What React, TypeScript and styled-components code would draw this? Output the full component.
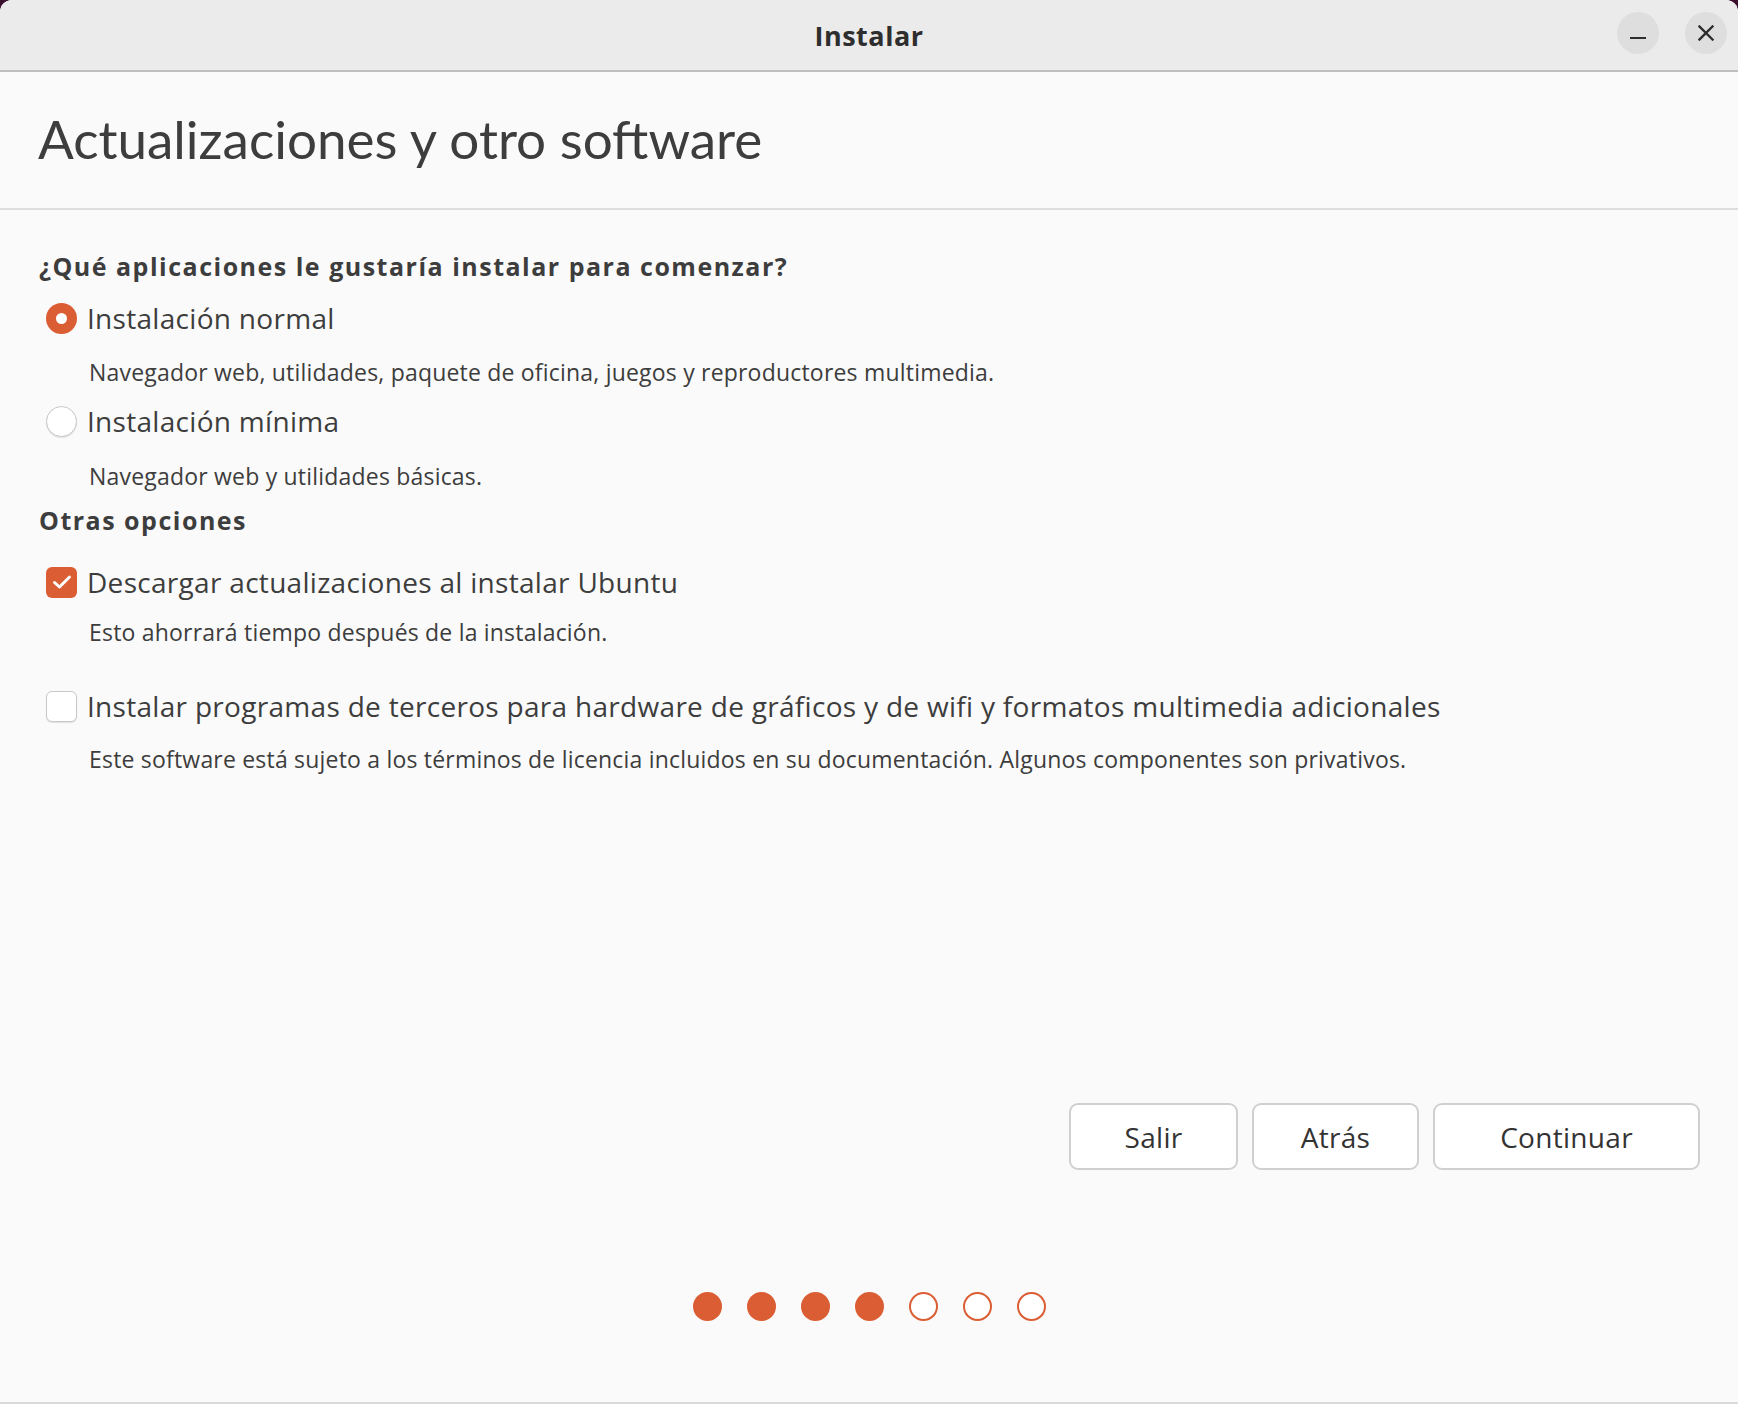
import React from "react";
import styled, { createGlobalStyle } from "styled-components";

const ORANGE = "#db5d33";
const TEXT = "#3d3d3d";
const FONT = `"Open Sans", "Lato", "DejaVu Sans", sans-serif`;
const HEAD_FONT = `"Lato", "Open Sans", sans-serif`;

const Global = createGlobalStyle`
  html, body {
    margin: 0;
    padding: 0;
    background: #3b0f2e;
  }
  body {
    font-family: ${FONT};
    color: ${TEXT};
    -webkit-font-smoothing: antialiased;
  }
`;

const Window = styled.div`
  width: 1738px;
  height: 1404px;
  display: flex;
  flex-direction: column;
  background: #fafafa;
  border-radius: 12px 12px 0 0;
  overflow: hidden;
`;

const TitleBar = styled.header`
  height: 70px;
  flex: none;
  background: #ebebeb;
  border-bottom: 2px solid #bfbfbf;
  display: grid;
  grid-template-columns: 1fr auto 1fr;
  align-items: center;
`;

const Title = styled.h1`
  grid-column: 2;
  margin: 0;
  font-family: ${FONT};
  font-size: 27px;
  font-weight: 700;
  letter-spacing: 0.5px;
  color: #2e2e2e;
`;

const WindowControls = styled.div`
  grid-column: 3;
  justify-self: end;
  display: flex;
  gap: 26px;
  padding-right: 11px;
  margin-bottom: 4px;
`;

const CtrlButton = styled.button`
  width: 42px;
  height: 42px;
  border-radius: 50%;
  border: none;
  padding: 0;
  background: #dedede;
  display: flex;
  align-items: center;
  justify-content: center;
  color: #2e2e2e;
`;

const Header = styled.div`
  height: 138px;
  box-sizing: border-box;
  padding-bottom: 4px;
  flex: none;
  display: flex;
  align-items: center;
  padding-left: 38px;
  border-bottom: 2px solid #dedede;
`;

const Heading = styled.h2`
  margin: 0;
  font-family: ${HEAD_FONT};
  font-size: 53px;
  font-weight: 400;
  color: ${TEXT};
  line-height: 1;
`;

const Content = styled.main`
  flex: 1;
  display: flex;
  flex-direction: column;
  padding-left: 39px;
`;

const Row = styled.div<{ $mt: number; $h?: number; $indent?: number }>`
  margin-top: ${(p) => p.$mt}px;
  height: ${(p) => p.$h ?? 36}px;
  display: flex;
  align-items: center;
  padding-left: ${(p) => p.$indent ?? 0}px;
`;

const SectionTitle = styled.div`
  font-size: 25px;
  font-weight: 700;
  letter-spacing: 1.5px;
  color: ${TEXT};
`;

const OptionLabel = styled.label`
  display: flex;
  align-items: center;
  gap: 10px;
  padding-left: 7px;
  font-size: 28px;
  letter-spacing: 0.3px;
  color: ${TEXT};
`;

const Description = styled.div`
  font-size: 23px;
  letter-spacing: 0.2px;
  color: ${TEXT};
`;

const Radio = styled.span<{ $checked?: boolean }>`
  width: 31px;
  height: 31px;
  box-sizing: border-box;
  border-radius: 50%;
  flex: none;
  display: flex;
  align-items: center;
  justify-content: center;
  background: ${(p) => (p.$checked ? ORANGE : "#ffffff")};
  border: ${(p) => (p.$checked ? "none" : "1.5px solid #c8c8c8")};
  box-shadow: ${(p) => (p.$checked ? "none" : "0 1px 1px rgba(0,0,0,0.1)")};
  &::after {
    content: "";
    display: ${(p) => (p.$checked ? "block" : "none")};
    width: 11px;
    height: 11px;
    border-radius: 50%;
    background: #fff;
  }
`;

const Checkbox = styled.span<{ $checked?: boolean }>`
  width: 31px;
  height: 31px;
  box-sizing: border-box;
  border-radius: 6px;
  flex: none;
  display: flex;
  align-items: center;
  justify-content: center;
  background: ${(p) => (p.$checked ? ORANGE : "#ffffff")};
  border: ${(p) => (p.$checked ? "none" : "1.5px solid #c8c8c8")};
  box-shadow: ${(p) => (p.$checked ? "none" : "0 1px 1px rgba(0,0,0,0.1)")};
`;

const Footer = styled.footer`
  flex: none;
  display: flex;
  flex-direction: column;
  padding-bottom: 81px;
  border-bottom: 2px solid #dadada;
`;

const ButtonBar = styled.div`
  display: flex;
  justify-content: flex-end;
  gap: 14px;
  padding-right: 38px;
  margin-bottom: 122px;
`;

const ActionButton = styled.button<{ $w: number }>`
  width: ${(p) => p.$w}px;
  height: 67px;
  border-radius: 9px;
  border: 2px solid #d0d0d0;
  background: #ffffff;
  font-family: ${FONT};
  font-size: 28px;
  letter-spacing: 0.3px;
  color: #333333;
  padding: 0;
`;

const Dots = styled.div`
  display: flex;
  justify-content: center;
  gap: 25px;
`;

const Dot = styled.span<{ $filled?: boolean }>`
  width: 29px;
  height: 29px;
  box-sizing: border-box;
  border-radius: 50%;
  background: ${(p) => (p.$filled ? ORANGE : "#ffffff")};
  border: 2px solid ${ORANGE};
`;

export default function App() {
  return (
    <>
      <Global />
      <Window>
        <TitleBar>
          <Title>Instalar</Title>
          <WindowControls>
            <CtrlButton aria-label="Minimizar">
              <svg width="16" height="16" viewBox="0 0 16 16">
                <rect x="0" y="12" width="16" height="2" fill="#2e2e2e" />
              </svg>
            </CtrlButton>
            <CtrlButton aria-label="Cerrar">
              <svg width="16" height="16" viewBox="0 0 16 16">
                <path d="M1.5 1.5 L14.5 14.5 M14.5 1.5 L1.5 14.5" stroke="#2e2e2e" strokeWidth="2.4" strokeLinecap="square" />
              </svg>
            </CtrlButton>
          </WindowControls>
        </TitleBar>

        <Header>
          <Heading>Actualizaciones y otro software</Heading>
        </Header>

        <Content>
          <Row $mt={38}>
            <SectionTitle>¿Qué aplicaciones le gustaría instalar para comenzar?</SectionTitle>
          </Row>
          <Row $mt={16}>
            <OptionLabel>
              <Radio $checked />
              Instalación normal
            </OptionLabel>
          </Row>
          <Row $mt={21} $h={30} $indent={50}>
            <Description>
              Navegador web, utilidades, paquete de oficina, juegos y reproductores multimedia.
            </Description>
          </Row>
          <Row $mt={16}>
            <OptionLabel>
              <Radio />
              Instalación mínima
            </OptionLabel>
          </Row>
          <Row $mt={22} $h={30} $indent={50}>
            <Description>Navegador web y utilidades básicas.</Description>
          </Row>
          <Row $mt={11}>
            <SectionTitle>Otras opciones</SectionTitle>
          </Row>
          <Row $mt={26}>
            <OptionLabel>
              <Checkbox $checked>
                <svg width="20" height="16" viewBox="0 0 20 16">
                  <path d="M2.5 8.5 L7.5 13 L17.5 3" fill="none" stroke="#fff" strokeWidth="3" strokeLinecap="round" strokeLinejoin="round" />
                </svg>
              </Checkbox>
              Descargar actualizaciones al instalar Ubuntu
            </OptionLabel>
          </Row>
          <Row $mt={17} $h={30} $indent={50}>
            <Description>Esto ahorrará tiempo después de la instalación.</Description>
          </Row>
          <Row $mt={41}>
            <OptionLabel>
              <Checkbox />
              Instalar programas de terceros para hardware de gráficos y de wifi y formatos multimedia adicionales
            </OptionLabel>
          </Row>
          <Row $mt={20} $h={30} $indent={50}>
            <Description>
              Este software está sujeto a los términos de licencia incluidos en su documentación. Algunos componentes son privativos.
            </Description>
          </Row>
        </Content>

        <Footer>
          <ButtonBar>
            <ActionButton $w={169}>Salir</ActionButton>
            <ActionButton $w={167}>Atrás</ActionButton>
            <ActionButton $w={267}>Continuar</ActionButton>
          </ButtonBar>
          <Dots>
            {[0, 1, 2, 3, 4, 5, 6].map((i) => (
              <Dot key={i} $filled={i < 4} />
            ))}
          </Dots>
        </Footer>
      </Window>
    </>
  );
}
